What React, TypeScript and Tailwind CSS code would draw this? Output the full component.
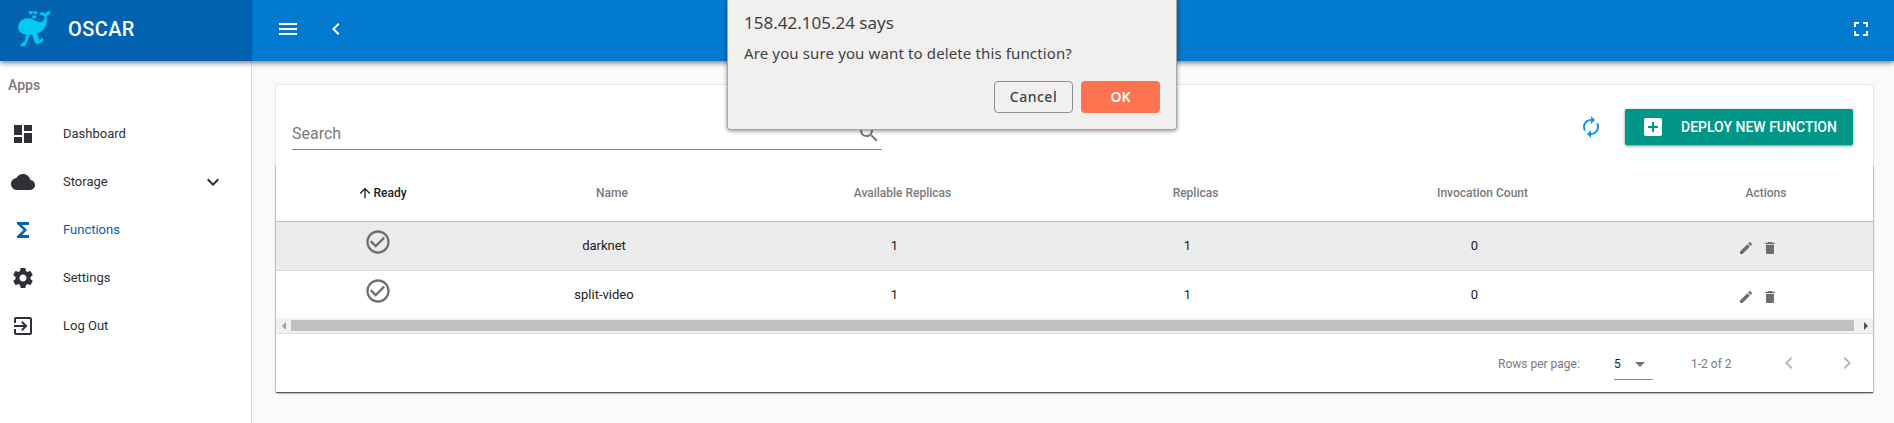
import React from "react";

const PATHS = {
  menu: "M3 18h18v-2H3v2zm0-5h18v-2H3v2zm0-7v2h18V6H3z",
  left: "M15.41 7.41L14 6l-6 6 6 6 1.41-1.41L10.83 12z",
  right: "M10 6L8.59 7.41 13.17 12l-4.58 4.59L10 18l6-6z",
  down: "M7.41 8.59L12 13.17l4.59-4.58L18 10l-6 6-6-6 1.41-1.41z",
  fullscreen: "M7 14H5v5h5v-2H7v-3zm-2-4h2V7h3V5H5v5zm12 7h-3v2h5v-5h-2v3zM14 5v2h3v3h2V5h-5z",
  dashboard: "M3 13h8V3H3v10zm0 8h8v-6H3v6zm10 0h8V11h-8v10zm0-18v6h8V3h-8z",
  cloud: "M19.35 10.04C18.67 6.59 15.64 4 12 4 9.11 4 6.6 5.64 5.35 8.04 2.34 8.36 0 10.91 0 14c0 3.31 2.69 6 6 6h13c2.76 0 5-2.24 5-5 0-2.64-2.05-4.78-4.65-4.96z",
  functions: "M18 4H6v2l6.500 6L6 18v2h12v-3h-7l5-5-5-5h7z",
  settings: "M19.43 12.98c.04-.32.07-.64.07-.98s-.03-.66-.07-.98l2.11-1.65c.19-.15.24-.42.12-.64l-2-3.46c-.12-.22-.39-.3-.61-.22l-2.49 1c-.52-.4-1.08-.73-1.69-.98l-.38-2.65C14.46 2.18 14.25 2 14 2h-4c-.25 0-.46.18-.49.42l-.38 2.65c-.61.25-1.17.59-1.69.98l-2.49-1c-.23-.09-.49 0-.61.22l-2 3.46c-.13.22-.07.49.12.64l2.11 1.65c-.04.32-.07.65-.07.98s.03.66.07.98l-2.11 1.65c-.19.15-.24.42-.12.64l2 3.46c.12.22.39.3.61.22l2.49-1c.52.4 1.08.73 1.69.98l.38 2.65c.03.24.24.42.49.42h4c.25 0 .46-.18.49-.42l.38-2.65c.61-.25 1.17-.59 1.69-.98l2.49 1c.23.09.49 0 .61-.22l2-3.46c.12-.22.07-.49-.12-.64l-2.11-1.65zM12 15.5c-1.93 0-3.5-1.57-3.5-3.5s1.57-3.5 3.5-3.5 3.5 1.57 3.5 3.5-1.57 3.5-3.5 3.5z",
  logout: "M10.09 15.59L11.5 17l5-5-5-5-1.41 1.41L12.67 11H3v2h9.67l-2.58 2.59zM19 3H5c-1.11 0-2 .9-2 2v4h2V5h14v14H5v-4H3v4c0 1.1.89 2 2 2h14c1.1 0 2-.9 2-2V5c0-1.1-.9-2-2-2z",
  search: "M15.5 14h-.79l-.28-.27C15.41 12.59 16 11.11 16 9.5 16 5.91 13.09 3 9.5 3S3 5.91 3 9.5 5.91 16 9.5 16c1.61 0 3.09-.59 4.23-1.57l.27.28v.79l5 4.99L20.49 19l-4.99-5zm-6 0C7.01 14 5 11.99 5 9.5S7.01 5 9.5 5 14 7.01 14 9.5 11.99 14 9.5 14z",
  renew: "M12 6v3l4-4-4-4v3c-4.42 0-8 3.58-8 8 0 1.57.46 3.03 1.24 4.26L6.7 14.8c-.45-.83-.7-1.79-.7-2.8 0-3.31 2.69-6 6-6zm6.76 1.74L17.3 9.2c.44.84.7 1.79.7 2.8 0 3.31-2.69 6-6 6v-3l-4 4 4 4v-3c4.42 0 8-3.58 8-8 0-1.57-.46-3.03-1.24-4.26z",
  addBox: "M19 3H5c-1.11 0-2 .9-2 2v14c0 1.1.89 2 2 2h14c1.1 0 2-.9 2-2V5c0-1.1-.9-2-2-2zm-2 10h-4v4h-2v-4H7v-2h4V7h2v4h4v2z",
  arrowUp: "M4 12l1.41 1.41L11 7.83V20h2V7.83l5.58 5.59L20 12l-8-8-8 8z",
  check: "M16.59 7.58L10 14.17l-3.59-3.58L5 12l5 5 8-8zM12 2C6.48 2 2 6.48 2 12s4.48 10 10 10 10-4.48 10-10S17.52 2 12 2zm0 18c-4.42 0-8-3.58-8-8s3.58-8 8-8 8 3.58 8 8-3.58 8-8 8z",
  edit: "M3 17.25V21h3.75L17.81 9.94l-3.75-3.75L3 17.25zM20.71 7.04c.39-.39.39-1.02 0-1.41l-2.34-2.34c-.39-.39-1.02-.39-1.41 0l-1.83 1.83 3.75 3.75 1.83-1.83z",
  trash: "M6 19c0 1.1.9 2 2 2h8c1.1 0 2-.9 2-2V7H6v12zM19 4h-3.5l-1-1h-5l-1 1H5v2h14V4z",
  dropdown: "M7 10l5 5 5-5z",
};

function Icon({ name, className = "size-6" }: { name: keyof typeof PATHS; className?: string }) {
  return (
    <svg viewBox="0 0 24 24" fill="currentColor" className={`shrink-0 ${className}`}>
      <path d={PATHS[name]} />
    </svg>
  );
}

function Whale() {
  return (
    <svg viewBox="0 0 34 38" className="h-[38px] w-[34px]" fill="#00cdf0" stroke="#06a3c9" strokeWidth="0.6">
      <path d="M1.300 17.500C1.300 11.500 6 8.300 11.500 8.300C16.500 8.300 18.500 12 22.500 12.300C26.500 12.300 28 9.500 27.300 5.800C25.500 5.500 23 5 22.500 3.300C25 2 27.500 2.300 28.300 3.600C29.200 2.200 31 1.300 33 1C33 4 31.800 5.600 29.400 5.900C30.300 10.500 29.800 14.500 27.500 18C25.800 20.500 23.500 22.500 20 23.600L22.600 31.300L24.600 27.800L26.600 29.200L25.800 31.800L20.500 33.800C19 34 18.300 33 17.800 31.800L15.200 24.500L13 24.700L8 36H3.200L4.300 33.800L8 31L9.500 24.600C4.500 24 1.300 21.500 1.300 17.500Z" />
      <path d="M12 1.300h3.500v2.800H12zM16.500 1.300H20v2.800h-3.500zM15.500 5.600H19v2.600h-3.500z" />
      <circle cx="8" cy="17" r="1" fill="#5fe3f5" />
      <path d="M3.500 20.200q2-1 3.500.8" fill="none" />
    </svg>
  );
}

const NAV = [
  { icon: "dashboard", label: "Dashboard" },
  { icon: "cloud", label: "Storage", expandable: true },
  { icon: "functions", label: "Functions", active: true },
  { icon: "settings", label: "Settings" },
  { icon: "logout", label: "Log Out" },
] as const;

const HEADERS = ["Ready", "Name", "Available Replicas", "Replicas", "Invocation Count", "Actions"];
const ROWS = [
  { name: "darknet", available: 1, replicas: 1, count: 0 },
  { name: "split-video", available: 1, replicas: 1, count: 0 },
];
const GRID = "grid grid-cols-[212px_232px_349px_237px_337px_230px]";

function Sidebar() {
  return (
    <aside className="h-full w-[252px] shrink-0 border-r border-[#dcdcdc] bg-white">
      <h2 className="flex h-[49px] items-center pl-2 text-[14px] font-medium text-[#7a7a7a]">Apps</h2>
      {NAV.map((item) => (
        <a
          key={item.label}
          className={`flex h-12 items-center pl-[11px] text-[13px] ${"active" in item ? "text-[#0062b1]" : "text-[#2f2f38]"}`}
        >
          <Icon name={item.icon} />
          <span className="ml-7 flex-1">{item.label}</span>
          {"expandable" in item && <Icon name="down" className="mr-[26px] size-6" />}
        </a>
      ))}
    </aside>
  );
}

function FunctionsTable() {
  return (
    <div className="flex h-[227px] flex-col bg-white shadow-[0_1px_1px_rgba(0,0,0,0.5),0_1px_2px_rgba(0,0,0,0.25),0_2px_3px_rgba(0,0,0,0.08)]">
      <div className={`${GRID} h-[57px] border-b border-[#bdbdbd]`}>
        {HEADERS.map((label, i) => (
          <div
            key={label}
            className={`flex items-center justify-center text-[12px] font-medium ${i === 0 ? "text-[#212121]" : "text-[#7a7a7a]"}`}
          >
            <Icon name="arrowUp" className={i === 0 ? "size-4" : "invisible size-4"} />
            {label}
          </div>
        ))}
      </div>
      {ROWS.map((row, i) => (
        <div
          key={row.name}
          className={`${GRID} text-center text-[13px] text-[#212121] ${i === 0 ? "h-[49px] border-b border-[#dcdcdc] bg-[#ececec] leading-[48px]" : "h-[47px] leading-[48px]"}`}
        >
          <div className="flex justify-center pt-[6px] pr-[8px] text-[#6e6e6e]">
            <Icon name="check" className="size-7" />
          </div>
          <div>{row.name}</div>
          <div>{row.available}</div>
          <div>{row.replicas}</div>
          <div>{row.count}</div>
          <div className="flex justify-center gap-2 pt-[18px] text-[#6e6e6e]">
            <Icon name="edit" className="size-4" />
            <Icon name="trash" className="size-4" />
          </div>
        </div>
      ))}
      <div className="flex h-[15px] items-center bg-[#f1f1f1]">
        <div className="flex w-[15px] justify-center">
          <svg viewBox="0 0 4 8" className="h-2 w-1" fill="#a3a3a3"><path d="M4 0v8L0 4z" /></svg>
        </div>
        <div className="h-[11px] flex-1 bg-[#c0c0c0]" />
        <div className="flex w-[19px] justify-end pr-[5px]">
          <svg viewBox="0 0 4 8" className="h-2 w-1" fill="#505050"><path d="M0 0v8l4-4z" /></svg>
        </div>
      </div>
      <div className="flex flex-1 items-center border-t border-[#dcdcdc] pl-[1222px] text-[12px] text-[#7a7a7a]">
        <span className="w-[116px] pt-[2px]">Rows per page:</span>
        <div className="mt-[2px] flex h-8 w-[39px] items-center border-b border-[#8a8a8a] text-[#212121]">
          <span className="w-[14px] pt-px">5</span>
          <Icon name="dropdown" className="size-6 text-[#757575]" />
        </div>
        <span className="ml-[38px] w-[86px] pt-[2px]">1-2 of 2</span>
        <Icon name="left" className="size-6 text-[#b8b8b8]" />
        <Icon name="right" className="ml-[34px] size-6 text-[#b8b8b8]" />
      </div>
    </div>
  );
}

function ConfirmDialog() {
  return (
    <div
      role="dialog"
      className="absolute top-0 left-[727px] z-20 h-[130px] w-[450px] rounded-b-[4px] border border-t-0 border-[#a6a6a6] bg-[#f2f0ef] px-4 font-['Noto_Sans',sans-serif] text-[#3d4245] shadow-[0_1px_4px_rgba(0,0,0,0.45)]"
    >
      <p className="pt-[11px] text-[17px] leading-6 whitespace-nowrap">158.42.105.24 says</p>
      <p className="pt-[6px] text-[15px] leading-6 tracking-[0.13px] whitespace-nowrap">Are you sure you want to delete this function?</p>
      <div className="mt-4 flex justify-end gap-2 text-[14px] font-medium">
        <button className="h-8 w-[79px] rounded-[4px] border border-[#8f8f8f] pb-px tracking-[0.5px]">Cancel</button>
        <button className="h-8 w-[79px] rounded-[4px] bg-[#ff7350] pb-px font-semibold text-white">OK</button>
      </div>
    </div>
  );
}

export default function App() {
  return (
    <div className="relative flex h-[423px] w-[1894px] flex-col overflow-hidden bg-[#fafafa] font-[Roboto,sans-serif]">
      <header className="relative z-10 flex h-[61px] shrink-0 text-white shadow-[0_2px_5px_rgba(0,0,0,0.5)]">
        <div className="flex w-[252px] items-center border-r border-[#0058a3] bg-[#0062b1] pb-[3px] pl-[17px]">
          <Whale />
          <h1 className="ml-[17px] text-[20px] font-medium tracking-[0.4px]">OSCAR</h1>
        </div>
        <div className="flex flex-1 items-center bg-[#0079ce] pr-[21px] pb-[3px] pl-6">
          <Icon name="menu" />
          <Icon name="left" className="ml-6 size-6" />
          <Icon name="fullscreen" className="ml-auto size-6" />
        </div>
      </header>
      <div className="flex min-h-0 flex-1">
        <Sidebar />
        <main className="px-6 pt-6">
          <section className="w-[1597px] rounded-[2px] bg-white shadow-[0_0_2px_rgba(0,0,0,0.25)]">
            <div className="flex h-20 items-start pt-6 pr-5 pl-4">
              <div className="mt-1 flex h-[37px] w-[590px] items-center justify-between border-b border-[#8a8a8a] pr-[1px] text-[16px] text-[#7a7a7a]">
                <span className="pt-[6px]">Search</span>
                <Icon name="search" className="mt-[3px] size-6" />
              </div>
              <Icon name="renew" className="mt-[6px] ml-auto size-6 text-[#1097f3]" />
              <button className="ml-[22px] flex h-9 w-[228px] items-center rounded-[2px] bg-[#009688] pl-4 text-[14px] font-medium whitespace-nowrap text-white shadow-[0_1px_3px_rgba(0,0,0,0.5)]">
                <Icon name="addBox" />
                <span className="ml-4">DEPLOY NEW FUNCTION</span>
              </button>
            </div>
            <FunctionsTable />
          </section>
        </main>
      </div>
      <ConfirmDialog />
    </div>
  );
}
